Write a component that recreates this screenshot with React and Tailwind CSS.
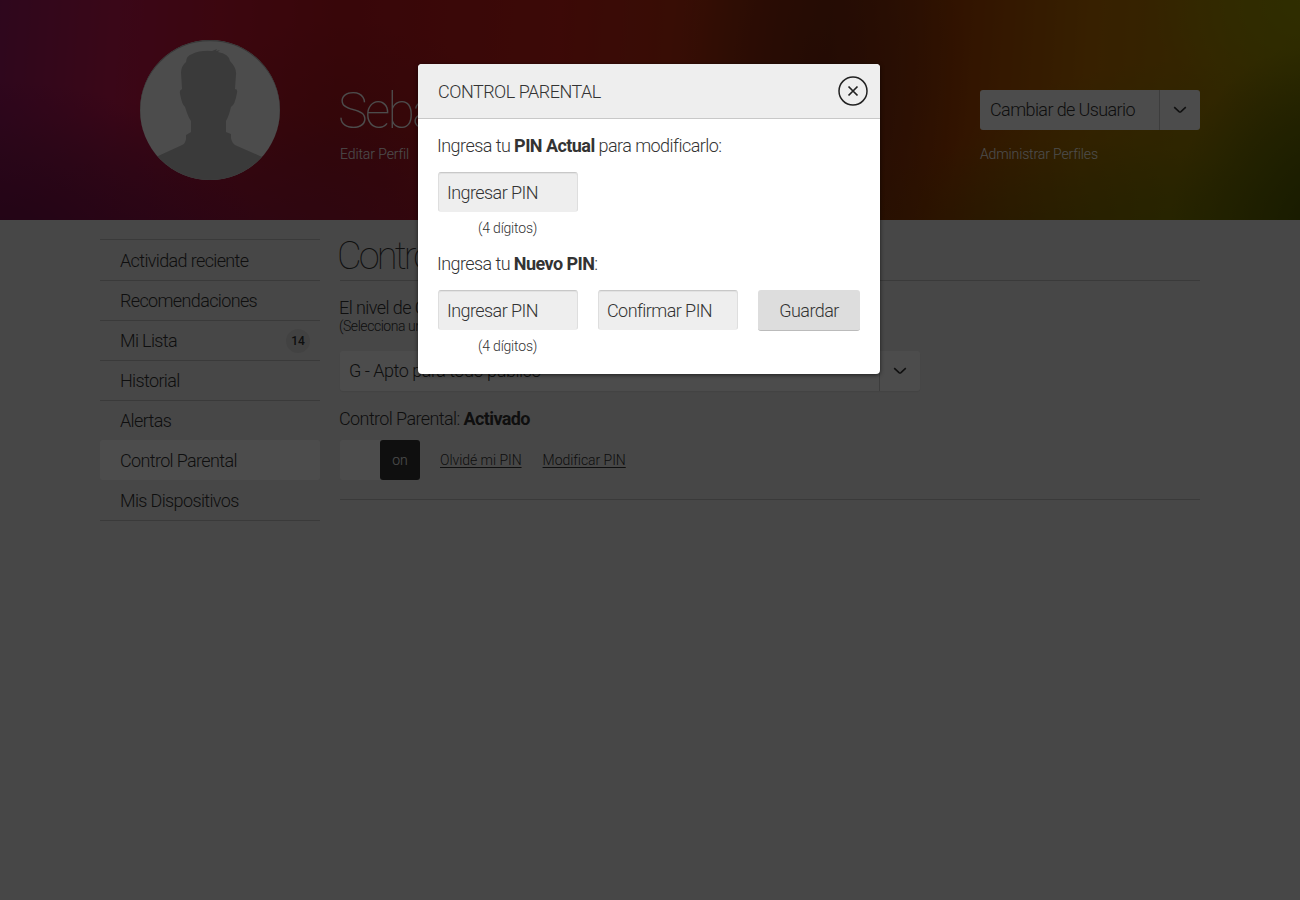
import React from "react";

const items = [
  { label: "Actividad reciente" },
  { label: "Recomendaciones" },
  { label: "Mi Lista", count: 14 },
  { label: "Historial" },
  { label: "Alertas" },
  { label: "Control Parental", active: true },
  { label: "Mis Dispositivos" },
];

function Chevron() {
  return (
    <svg width="14" height="8" viewBox="0 0 14 8" fill="none" stroke="#333" strokeWidth="1.6">
      <path d="M1.2 1.2 L6 5.600 Q7 6.400 8 5.600 L12.800 1.200" />
    </svg>
  );
}

function Avatar() {
  return (
    <svg className="ml-10 shrink-0" width="140" height="140" viewBox="0 0 140 140">
      <defs>
        <clipPath id="disc">
          <circle cx="70" cy="70" r="70" />
        </clipPath>
      </defs>
      <g clipPath="url(#disc)">
        <rect width="140" height="140" fill="#fff" />
        <circle cx="70" cy="71" r="70.500" fill="none" stroke="#bbb" strokeWidth="1.500" />
        <path
          fill="#c4c4c4"
          d="M0 124 L18 116 L42 105 Q45 104 46 99 L46 95 L51 92 L51 81 Q48 77 45 67 Q42 65 40 54 Q39 50 42 49 L41 33 Q41 26 46 22 Q46 16 52 14 Q60 10 72 11 L77 9 L76 11 L80 10 L78 12 Q89 14 90 21 Q97 28 96 35 L95 49 Q98 49 97 53 Q95 65 91 67 Q89 76 86 81 L86 92 L91 94 L91 98 Q92 103 95 105 L120 116 L140 124 V140 H0 Z"
        />
      </g>
    </svg>
  );
}

function PinField({ label }) {
  return (
    <div className="h-10 w-[140px] rounded-[3px] border border-[#dedede] border-t-[#c8c8c8] border-b-[#eee] bg-[#eee] pl-[8px] leading-[39px] shadow-[inset_0_1px_0_#e2e2e2]">
      {label}
    </div>
  );
}

export default function App() {
  return (
    <div className="relative h-[900px] w-[1300px] overflow-hidden bg-[#eee] font-['Roboto',sans-serif] text-[18px] leading-[24px] font-light tracking-[-0.57px] text-[#333]">
      <header className="h-[220px] bg-[radial-gradient(ellipse_160px_190px_at_1330px_230px,#4a5600,rgba(74,86,0,0)),radial-gradient(ellipse_280px_180px_at_1190px_240px,rgba(122,128,0,0.85),rgba(122,128,0,0)),radial-gradient(ellipse_160px_120px_at_1310px_0px,#a09a00,rgba(160,154,0,0)),radial-gradient(ellipse_300px_120px_at_1050px_260px,rgba(110,60,0,0.7),rgba(110,60,0,0)),radial-gradient(ellipse_150px_240px_at_820px_70px,rgba(120,35,15,0.75),rgba(120,35,15,0)),radial-gradient(ellipse_260px_160px_at_0px_240px,rgba(110,16,72,0.9),rgba(110,16,72,0)),radial-gradient(ellipse_420px_140px_at_200px_250px,rgba(135,20,70,0.8),rgba(135,20,70,0)),radial-gradient(ellipse_180px_130px_at_340px_150px,rgba(150,22,36,0.5),rgba(150,22,36,0)),linear-gradient(94deg,#9c1862_0px,#c41850_120px,#c81434_220px,#bc1620_340px,#c82018_560px,#b83010_700px,#803010_830px,#a84200_960px,#b86c00_1090px,#ac8000_1220px,#908400_1310px)]">
        <div className="mx-[100px] flex pt-10">
          <Avatar />
          <div className="ml-[58px] w-[642px] pt-[43px] text-white">
            <h1 className="h-14 text-[50px] leading-[57px] font-thin tracking-[-2.6px]">Sebastián</h1>
            <div className="mt-[5px] ml-[2px] text-[14px] leading-5 tracking-[-0.1px]">Editar Perfil</div>
          </div>
          <div className="w-[220px] pt-[50px]">
            <div className="flex h-10 rounded-[3px] bg-white">
              <div className="w-[180px] border-r border-[#ccc] pl-[10px] leading-10 tracking-[-0.6px]">Cambiar de Usuario</div>
              <div className="flex flex-1 items-center justify-center"><Chevron /></div>
            </div>
            <div className="mt-[14px] text-[14px] leading-5 tracking-[-0.13px] text-white">Administrar Perfiles</div>
          </div>
        </div>
      </header>

      <div className="mx-[100px] flex gap-5 pt-[19px]">
        <nav className="w-[220px] border-t border-[#c4c4c4] tracking-[-0.64px]">
          {items.map((item) => (
            <div
              key={item.label}
              className={
                item.active
                  ? "flex h-10 items-center rounded-[3px] bg-white pt-[2px] pl-5"
                  : item.label === "Alertas"
                    ? "flex h-[39px] items-center pt-px pl-5"
                    : item.label === "Mis Dispositivos" || item.label === "Actividad reciente"
                      ? "flex h-[41px] items-center border-b border-[#c4c4c4] pt-[2px] pl-5"
                      : "flex h-10 items-center justify-between border-b border-[#c4c4c4] pt-px pr-[10px] pl-5"
              }
            >
              {item.label}
              {item.count && (
                <span className="size-6 rounded-full bg-[#ddd] text-center text-[12px] font-medium tracking-normal">
                  {item.count}
                </span>
              )}
            </div>
          ))}
        </nav>

        <main className="-ml-px w-[861px]">
          <h2 className="-ml-[2px] h-[42px] text-[38px] leading-[35px] font-thin tracking-[-2.1px]">
            <span className="tracking-[-2.9px]">Control</span> Parental
          </h2>
          <div className="-mt-px ml-px border-t border-[#c4c4c4]" />
          <div className="pt-[15px]">El nivel de Control Parental actual es:</div>
          <div className="-mt-[4px] text-[14px] leading-[20px] tracking-[-0.45px]">(Selecciona una opción)</div>
          <div className="mt-[15px] ml-px flex h-10 w-[580px] rounded-[3px] bg-white shadow-[0_1px_1px_#ddd]">
            <div className="w-[540px] border-r border-[#ccc] pl-[9px] leading-10 tracking-[-0.48px]">G - Apto para todo público</div>
            <div className="flex flex-1 items-center justify-center"><Chevron /></div>
          </div>
          <div className="mt-4 tracking-[-0.6px]">Control Parental: <b className="font-bold">Activado</b></div>
          <div className="ml-px mt-[9px] flex h-10 items-center text-[14px] tracking-[-0.05px]">
            <div className="flex h-10 w-20 justify-end rounded-[3px] bg-white">
              <div className="w-10 rounded-[3px] bg-[#333] text-center leading-10 text-white">on</div>
            </div>
            <span className="ml-5 underline underline-offset-2">Olvidé mi PIN</span>
            <span className="ml-[21px] underline underline-offset-2">Modificar PIN</span>
          </div>
          <div className="mt-[19px] ml-px border-t border-[#c4c4c4]" />
        </main>
      </div>

      <div className="absolute inset-0 flex items-start justify-center bg-black/70 pt-16 pr-[2px]">
        <section className="h-[310px] w-[462px] overflow-hidden rounded-[4px] bg-white shadow-[0_1px_4px_rgba(0,0,0,0.6)]">
          <div className="flex h-[55px] items-center justify-between border-b border-[#c8c8c8] bg-[#eee] pr-3 pl-5">
            <span className="pt-[2px] tracking-[-0.5px]">CONTROL PARENTAL</span>
            <svg width="30" height="30" viewBox="0 0 30 30" fill="none" stroke="#222">
              <circle cx="15" cy="15" r="14" strokeWidth="1.500" />
              <path d="M10.500 10.500 L19.500 19.500 M19.500 10.500 L10.500 19.500" strokeWidth="1.700" />
            </svg>
          </div>
          <div className="px-5 pt-[15px]">
            <div className="-ml-px tracking-[-0.55px]">Ingresa tu <b className="font-bold">PIN Actual</b> para modificarlo:</div>
            <div className="mt-[14px]"><PinField label="Ingresar PIN" /></div>
            <div className="mt-[6px] ml-10 text-[14px] leading-5 tracking-[-0.2px]">(4 dígitos)</div>
            <div className="mt-[14px] -ml-px">Ingresa tu <b className="font-bold">Nuevo PIN</b>:</div>
            <div className="mt-[14px] flex gap-5">
              <PinField label="Ingresar PIN" />
              <PinField label="Confirmar PIN" />
              <div className="h-[41px] w-[102px] shrink-0 rounded-[3px] border-b border-[#bbb] bg-[#ddd] text-center leading-[41px]">Guardar</div>
            </div>
            <div className="mt-[5px] ml-10 text-[14px] leading-5 tracking-[-0.2px]">(4 dígitos)</div>
          </div>
        </section>
      </div>
    </div>
  );
}
